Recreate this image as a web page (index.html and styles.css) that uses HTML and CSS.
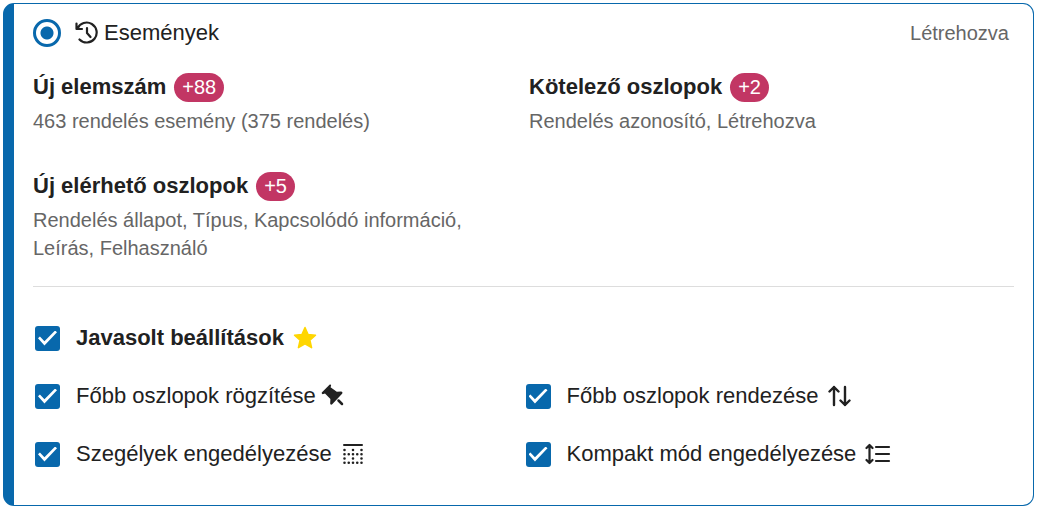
FILE: index.html
```html
<!DOCTYPE html>
<html lang="hu">
<head>
<meta charset="utf-8">
<meta name="viewport" content="width=device-width, initial-scale=1">
<title>Események</title>
<link rel="stylesheet" href="styles.css">
</head>
<body>
<main class="card">
  <header class="head">
    <input class="radio" type="radio" id="events" name="type" checked>
    <label class="head-label" for="events">
      <svg class="icon" viewBox="0 0 24 24" fill="none" stroke="currentColor" stroke-width="2.200" stroke-linecap="round" stroke-linejoin="round" aria-hidden="true"><path d="M1.500 2.500V8H7M2.500 7.500A10 10 0 1 1 4.500 18.500M12 7v5l3.500 4"/></svg>
      Események
    </label>
    <span class="head-note">Létrehozva</span>
  </header>
  <section class="facts">
    <div class="fact">
      <h2 class="fact-title">Új elemszám <span class="badge">+88</span></h2>
      <p class="fact-text">463 rendelés esemény (375 rendelés)</p>
    </div>
    <div class="fact">
      <h2 class="fact-title">Kötelező oszlopok <span class="badge">+2</span></h2>
      <p class="fact-text">Rendelés azonosító, Létrehozva</p>
    </div>
    <div class="fact">
      <h2 class="fact-title">Új elérhető oszlopok <span class="badge">+5</span></h2>
      <p class="fact-text">Rendelés állapot, Típus, Kapcsolódó információ, Leírás, Felhasználó</p>
    </div>
  </section>
  <section class="options">
    <div class="option option-main">
      <input class="check" type="checkbox" id="recommended" checked>
      <label class="option-label" for="recommended">Javasolt beállítások
        <svg class="icon star" viewBox="0 0 24 24" fill="currentColor" stroke="currentColor" stroke-width="1.500" stroke-linejoin="round" aria-hidden="true"><path d="M12 1.500l3.100 7 7.400.7-5.600 5 1.700 7.500L12 17.800l-6.600 3.900 1.700-7.500-5.600-5 7.400-.7z"/></svg>
      </label>
    </div>
    <div class="option">
      <input class="check" type="checkbox" id="pin" checked>
      <label class="option-label option-tight" for="pin">Főbb oszlopok rögzítése
        <svg class="icon" viewBox="0 0 24 24" fill="currentColor" aria-hidden="true"><path d="M8.500.8c.8-.7 2 .2 1.500 1.200l-.5 1.200 6.300 4.600 4.200-.2c1.400 0 1.900 1.200 1.100 2.100l-9.900 10.600c-.9.800-2.200.2-2-1.200l.2-4-5.400-5.600-1.600.6C1.200 10.500.2 9.200 1 8.300z"/><path d="M17.500 16.500l3.500 3.500" stroke="currentColor" stroke-width="2.500" stroke-linecap="round"/></svg>
      </label>
    </div>
    <div class="option">
      <input class="check" type="checkbox" id="sort" checked>
      <label class="option-label" for="sort">Főbb oszlopok rendezése
        <svg class="icon" viewBox="0 0 24 24" fill="none" stroke="currentColor" stroke-width="2.400" stroke-linecap="round" stroke-linejoin="round" aria-hidden="true"><path d="M7 21V3M2.500 7.500L7 3l4.500 4.500M18 3v18M13.500 16.500L18 21l4.500-4.500"/></svg>
      </label>
    </div>
    <div class="option">
      <input class="check" type="checkbox" id="borders" checked>
      <label class="option-label" for="borders">Szegélyek engedélyezése
        <svg class="icon" viewBox="0 0 24 24" fill="none" stroke="currentColor" stroke-width="2" stroke-linecap="round" aria-hidden="true"><path d="M3 3h18"/><path stroke-width="2.600" d="M3.500 8h0M12 8h0M20.500 8h0M3.500 12.250h0M7.750 12.250h0M12 12.250h0M16.250 12.250h0M20.500 12.250h0M3.500 16.500h0M12 16.500h0M20.500 16.500h0M3.500 20.750h0M7.750 20.750h0M12 20.750h0M16.250 20.750h0M20.500 20.750h0"/></svg>
      </label>
    </div>
    <div class="option">
      <input class="check" type="checkbox" id="compact" checked>
      <label class="option-label" for="compact">Kompakt mód engedélyezése
        <svg class="icon wide" viewBox="0 0 26 24" fill="none" stroke="currentColor" stroke-width="2.200" stroke-linecap="round" stroke-linejoin="round" aria-hidden="true"><path d="M4.500 3.500v17M1.500 6l3-3 3 3M1.500 18l3 3 3-3M11 5h13M11 12h13M11 19h13"/></svg>
      </label>
    </div>
  </section>
</main>
</body>
</html>
```
FILE: styles.css
```css
* { box-sizing: border-box; }
body {
  margin: 3px 4px 4px 3px;
  background: #fff;
  color: #212121;
  font: 22px/32px "Liberation Sans", Arial, sans-serif;
}
.card {
  border: 1px solid #0868ac;
  border-left-width: 11px;
  border-radius: 11px;
  padding: 13px 19px 35px;
}
.head, .head-label, .option, .option-label { display: flex; align-items: center; }
.head-label { gap: 5px; margin-left: 14px; }
.head-note { margin-left: auto; padding-right: 5px; color: #666; font-size: 20px; }
.icon { width: 24px; height: 24px; flex: none; }
.wide { width: 26px; }
.star { color: #ffd600; }
.radio, .check { appearance: none; margin: 0; flex: none; }
.radio {
  width: 28px;
  height: 28px;
  border: 3px solid #0868ac;
  border-radius: 50%;
  background: radial-gradient(circle, #0868ac 6px, transparent 7px);
}
.check {
  width: 25px;
  height: 25px;
  margin-left: 2px;
  border-radius: 3px;
  background: #0868ac;
  display: grid;
  place-items: center;
}
.check::before {
  content: "";
  width: 19px;
  height: 15px;
  background: #fff;
  clip-path: polygon(0 52%, 10% 40%, 34% 72%, 90% 0, 100% 12%, 34% 100%);
}
.facts {
  display: grid;
  grid-template-columns: 1fr 1fr;
  gap: 36px 11px;
  padding: 23px 0 24px;
  border-bottom: 1px solid #ddd;
}
.fact-title {
  display: flex;
  align-items: center;
  gap: 8px;
  margin: 0 0 5px;
  font-size: 22px;
  line-height: 30px;
}
.badge {
  padding: 0 8px;
  border-radius: 15px;
  background: #c23664;
  color: #fff;
  font-size: 20px;
  font-weight: 400;
  line-height: 29px;
}
.fact-text { margin: 0; color: #666; font-size: 20px; line-height: 28px; }
.options {
  display: grid;
  grid-template-columns: 1fr 1fr;
  row-gap: 26px;
  padding-top: 35px;
}
.option-main { grid-column: 1 / -1; font-weight: 700; }
.option-label { gap: 9px; margin-left: 16px; }
.option-tight { gap: 5px; }
```
